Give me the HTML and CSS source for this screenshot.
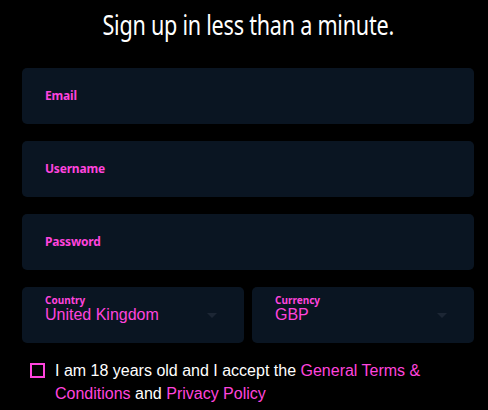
FILE: index.html
```html
<!DOCTYPE html>
<html>
<head>
<meta charset="utf-8">
<link rel="stylesheet" href="styles.css">
</head>
<body>
<div class="page">
  <h1 class="title"><span class="title-text">Sign up in less than a minute.</span></h1>
  <form class="form">
    <div class="field"><span class="label">Email</span></div>
    <div class="field"><span class="label">Username</span></div>
    <div class="field"><span class="label">Password</span></div>
    <div class="row">
      <div class="select">
        <span class="small-label">Country</span>
        <span class="value">United Kingdom</span>
        <span class="arrow"></span>
      </div>
      <div class="select">
        <span class="small-label">Currency</span>
        <span class="value">GBP</span>
        <span class="arrow"></span>
      </div>
    </div>
    <div class="terms">
      <span class="check"></span>
      <p class="terms-text">I am 18 years old and I accept the <a class="link">General Terms &amp; Conditions</a> and <a class="link">Privacy Policy</a></p>
    </div>
  </form>
</div>
</body>
</html>
```
FILE: styles.css
```css
html, body {
  margin: 0;
  background: #000;
}
.page {
  width: 488px;
  height: 410px;
  overflow: hidden;
  padding: 0 14px 0 22px;
  box-sizing: border-box;
}
.title {
  margin: 0;
  padding-top: 8px;
  height: 68px;
  box-sizing: border-box;
  text-align: center;
  color: #fff;
  font-family: "Noto Sans", sans-serif;
  font-weight: 400;
  font-size: 27px;
  letter-spacing: -0.3px;
  line-height: 34px;
  white-space: nowrap;
}
.title-text {
  display: inline-block;
  transform: scaleX(0.8);
  transform-origin: 50% 50%;
}
.form {
  display: flex;
  flex-direction: column;
  gap: 17px;
  margin: 0;
}
.field {
  height: 56px;
  background: #0a1522;
  border-radius: 5px;
  display: flex;
  align-items: center;
  padding-left: 23px;
  padding-bottom: 2px;
  box-sizing: border-box;
}
.label {
  color: #ff44dd;
  font-family: "Noto Sans", sans-serif;
  font-weight: 700;
  font-size: 12px;
  letter-spacing: -0.2px;
}
.row {
  display: flex;
  gap: 8px;
}
.select {
  position: relative;
  flex: 1;
  height: 56px;
  background: #0a1522;
  border-radius: 5px;
  display: flex;
  flex-direction: column;
  padding: 8px 0 0 23px;
  box-sizing: border-box;
}
.small-label {
  color: #ff44dd;
  font-family: "Noto Sans", sans-serif;
  font-weight: 700;
  font-size: 10px;
  line-height: 11px;
}
.value {
  color: #ff44dd;
  font-family: "Liberation Sans", Arial, sans-serif;
  font-size: 16px;
  line-height: 18px;
}
.arrow {
  position: absolute;
  right: 27px;
  top: 26px;
  width: 0;
  height: 0;
  border-left: 5px solid transparent;
  border-right: 5px solid transparent;
  border-top: 5px solid #1c2634;
}
.terms {
  display: flex;
  align-items: flex-start;
  gap: 10px;
  padding-left: 8px;
  margin-top: -1px;
}
.check {
  flex: none;
  width: 15px;
  height: 15px;
  border: 2px solid #ff44dd;
  box-sizing: border-box;
  margin-top: 4px;
}
.terms-text {
  margin: 0;
  color: #fff;
  font-family: "Liberation Sans", Arial, sans-serif;
  font-size: 16px;
  line-height: 23px;
}
.link {
  color: #ff44dd;
}
```
